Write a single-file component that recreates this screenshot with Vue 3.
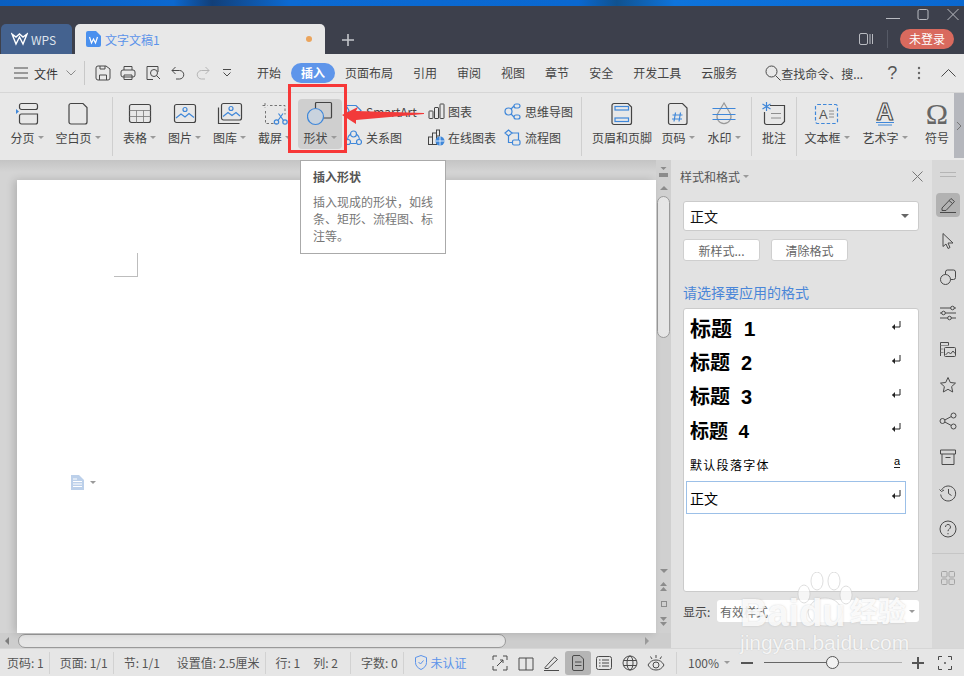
<template>
  <div class="app">
    <div class="desktop"></div>

    <!-- Barra de título -->
    <header class="titlebar">
      <div class="win-row">
        <svg width="16" height="16" viewBox="0 0 16 16" class="win"><path d="M1 11.500h14" /></svg>
        <svg width="16" height="16" viewBox="0 0 16 16" class="win"><rect x="3" y="2.500" width="10" height="10" rx="1.500" /></svg>
        <svg width="16" height="16" viewBox="0 0 16 16" class="win"><path d="M2.500 2l11 11M13.500 2l-11 11" /></svg>
      </div>
      <div class="tab-row">
        <div class="tab-wps">
          <svg width="17" height="14" viewBox="0 0 17 14" class="wps-logo"><path d="M1 2l4 10 3.500-7 3.500 7 4-10-4 3-3.500-3-3.500 3z" /></svg>
          <span>WPS</span>
        </div>
        <div class="tab-doc">
          <svg width="15" height="16" viewBox="0 0 15 16"><path d="M2 0h8l5 5v9a2 2 0 0 1-2 2H2a2 2 0 0 1-2-2V2a2 2 0 0 1 2-2z" fill="#4a90ee" /><path d="M3.500 6l2 6 2-4 2 4 2-6" fill="none" stroke="#fff" stroke-width="1.200" /></svg>
          <span class="doc-name">文字文稿1</span>
          <i class="dot"></i>
        </div>
        <svg width="14" height="14" viewBox="0 0 14 14" class="plus"><path d="M7 1v12M1 7h12" /></svg>
        <div class="title-right">
          <svg width="14" height="14" viewBox="0 0 14 14" class="win"><rect x="0.500" y="1.500" width="8" height="11" rx="1.500" /><path d="M11 2v10M13.500 2v10" /></svg>
          <i class="title-sep"></i>
          <span class="login">未登录</span>
        </div>
      </div>
    </header>

    <!-- Menú -->
    <nav class="menubar">
      <svg width="14" height="12" viewBox="0 0 14 12" class="st-ic ham"><path d="M0 1h14M0 6h14M0 11h14" /></svg>
      <span class="file-menu">文件</span>
      <svg width="10" height="6" viewBox="0 0 10 6" class="chev"><path d="M0.500 0.500l4.500 4.500 4.500-4.500" /></svg>
      <i class="menu-sep"></i>
      <div class="quick">
        <svg width="16" height="16" viewBox="0 0 16 16" class="st-ic"><path d="M1 3a2 2 0 0 1 2-2h8l4 3v9a2 2 0 0 1-2 2H3a2 2 0 0 1-2-2z" /><path d="M4.500 15v-5h7v5M5 1v3h5V1" /></svg>
        <svg width="16" height="16" viewBox="0 0 16 16" class="st-ic"><rect x="1" y="5" width="14" height="7" rx="2" /><path d="M4 5V1.500h8V5M4 10v4.500h8V10z" /></svg>
        <svg width="16" height="16" viewBox="0 0 16 16" class="st-ic"><path d="M13 7V1.500H2v13h6" /><circle cx="9" cy="8" r="3.500" /><path d="M11.500 10.500l3.500 3.500" /></svg>
        <svg width="14" height="14" viewBox="0 0 14 14" class="st-ic q-undo"><path d="M4.500 1L1 4.500 4.500 8M1 4.500h7.500a4 4 0 0 1 0 8.500H5" /></svg>
        <svg width="14" height="14" viewBox="0 0 14 14" class="st-ic faint q-redo"><path d="M9.500 1L13 4.500 9.500 8M13 4.500H5.500a4 4 0 0 0 0 8.500H9" /></svg>
        <svg width="10" height="8" viewBox="0 0 10 8" class="st-ic q-more"><path d="M1 .5h8M1.500 3.500L5 7l3.500-3.500" /></svg>
      </div>
      <div class="tabs">
        <span v-for="t in menuTabs" :key="t" class="menu-tab" :class="{ active: t === '插入' }">{{ t }}</span>
      </div>
      <svg width="16" height="16" viewBox="0 0 16 16" class="st-ic search"><circle cx="6.500" cy="6.500" r="5.500" /><path d="M10.500 10.500l5 5" /></svg>
      <span class="search-text">查找命令、搜...</span>
      <span class="help">?</span>
      <svg width="4" height="14" viewBox="0 0 4 14" class="dots"><circle cx="2" cy="2" r="1.200" /><circle cx="2" cy="7" r="1.200" /><circle cx="2" cy="12" r="1.200" /></svg>
      <svg width="15" height="8" viewBox="0 0 15 8" class="st-ic collapse"><path d="M.5 7.500l7-7 7 7" /></svg>
    </nav>

    <!-- Cinta de herramientas -->
    <section class="ribbon">
      <div class="group g1">
        <div class="tool w50">
          <svg class="ic" viewBox="0 0 26 26"><rect x="5.500" y="2.500" width="18" height="6" rx="2" /><path d="M5.500 15a2 2 0 0 1 2-2h9l3 0 4 0v8a2 2 0 0 1-2 2h-14a2 2 0 0 1-2-2z" /><path d="M2 8l3 2.500L2 13z" class="bf" /></svg>
          <span class="lbl">分页<i class="caret"></i></span>
        </div>
        <div class="tool w52">
          <svg class="ic" viewBox="0 0 26 26"><path d="M6 2.500h12l4 4V21a2 2 0 0 1-2 2H6a2 2 0 0 1-2-2V4.500a2 2 0 0 1 2-2z" /></svg>
          <span class="lbl">空白页<i class="caret"></i></span>
        </div>
      </div>

      <div class="group g2">
        <div class="tool w45">
          <svg class="ic" viewBox="0 0 26 26"><rect x="2.500" y="3.500" width="21" height="18" rx="2" /><path d="M2.500 9.500h21M2.500 15.500h21M9.500 9.500v12M16.500 9.500v12" class="thin" /></svg>
          <span class="lbl">表格<i class="caret"></i></span>
        </div>
        <div class="tool w45">
          <svg class="ic" viewBox="0 0 26 26"><rect x="2.500" y="3.500" width="21" height="18" rx="2" /><circle cx="13" cy="8.500" r="2" class="bs" /><path d="M4 17l5-4 4 3 4-3.500 5 4" class="bs" /></svg>
          <span class="lbl">图片<i class="caret"></i></span>
        </div>
        <div class="tool w45">
          <svg class="ic" viewBox="0 0 26 26"><path d="M1.500 6.500v16h21" /><rect x="4.500" y="2.500" width="20" height="16.500" rx="2" /><circle cx="14" cy="7.500" r="2" class="bs" /><path d="M6 15.500l5-4 4 3 4-3 4 3.500" class="bs" /></svg>
          <span class="lbl">图库<i class="caret"></i></span>
        </div>
        <div class="tool w45">
          <svg class="ic" viewBox="0 0 26 26"><path d="M3 2v5M.5 4.500h5M8 4.500h15v9M3.500 10v12.500h11" stroke-dasharray="2.500 2" class="thin dark" /><circle cx="14.500" cy="21" r="2.200" class="bs" /><circle cx="23" cy="21" r="2.200" class="bs" /><path d="M16 19.500l5-7M21.500 19.500l-5-7" class="bs" /></svg>
          <span class="lbl">截屏<i class="caret"></i></span>
        </div>
        <div class="tool w44 active-tool">
          <svg class="ic" viewBox="0 0 26 26"><rect x="8.500" y="1.500" width="16" height="15.500" rx="1" /><circle cx="8.500" cy="15.500" r="8" fill="#c9d3de" stroke="#3f87d9" /></svg>
          <span class="lbl">形状<i class="caret"></i></span>
        </div>
      </div>

      <div class="mini-cols">
        <div class="mini-col c1">
          <div class="mini">
            <svg width="17" height="17" viewBox="0 0 17 17"><path d="M1 2.500h10l5 5-5 5H1l3-5z" class="bs" /></svg>
            <span>SmartArt</span>
          </div>
          <div class="mini">
            <svg width="17" height="17" viewBox="0 0 17 17"><circle cx="8.500" cy="5" r="3" class="bs" /><circle cx="3" cy="13" r="2.500" class="bs" /><circle cx="14" cy="13" r="2.500" class="bs" /><path d="M5 5.500a6.500 6.500 0 0 0-2.500 5M12 5.500a6.500 6.500 0 0 1 2.500 5M5.500 14.500h6" class="bs" /></svg>
            <span>关系图</span>
          </div>
        </div>
        <div class="mini-col c2">
          <div class="mini">
            <svg width="17" height="17" viewBox="0 0 17 17"><rect x="1" y="8" width="4" height="7.500" rx=".5" class="dk" /><rect x="6.500" y="4.500" width="4" height="11" rx=".5" class="dk" /><rect x="12" y="1" width="4" height="14.500" rx=".5" class="dk" /></svg>
            <span>图表</span>
          </div>
          <div class="mini">
            <svg width="17" height="17" viewBox="0 0 17 17"><rect x=".5" y="8" width="4" height="7.500" class="dk" /><rect x="4.500" y="4" width="4" height="11.500" class="dk" /><rect x="8.500" y="1" width="3" height="6" class="dk" /><circle cx="12" cy="12" r="4.500" fill="#3f87d9" /><path d="M7.500 12h9M12 7.500v9" stroke="#fff" stroke-width=".8" /></svg>
            <span>在线图表</span>
          </div>
        </div>
        <div class="mini-col c3">
          <div class="mini">
            <svg width="17" height="17" viewBox="0 0 17 17"><circle cx="4.500" cy="8.500" r="3.500" class="bs" /><rect x="10" y="1" width="6" height="4" rx="2" class="bs" /><rect x="10" y="12" width="6" height="4" rx="2" class="bs" /><path d="M7 6l3-3M7 11l3 3" class="bs" /></svg>
            <span>思维导图</span>
          </div>
          <div class="mini">
            <svg width="17" height="17" viewBox="0 0 17 17"><path d="M4.500 1l3.500 3-3.500 3L1 4z" class="bs" /><rect x="8.500" y="11" width="7.500" height="5" rx="1.500" class="bs" /><path d="M4.500 7v6.500h4M8 4h6.500v7" class="bs" /></svg>
            <span>流程图</span>
          </div>
        </div>
      </div>

      <div class="group g3">
        <div class="tool w66">
          <svg class="ic" viewBox="0 0 26 26"><path d="M5 2.500h14l3.500 3.500v15.500a2 2 0 0 1-2 2H5a2 2 0 0 1-2-2v-17a2 2 0 0 1 2-2z" /><rect x="6" y="5.500" width="13.500" height="3.500" class="bs" /><rect x="6" y="17" width="13.500" height="3.500" class="bs" /></svg>
          <span class="lbl">页眉和页脚</span>
        </div>
        <div class="tool w46">
          <svg class="ic" viewBox="0 0 26 26"><path d="M5.500 2.500h12l4.500 4.500v14.500a2 2 0 0 1-2 2H5.500a2 2 0 0 1-2-2v-17a2 2 0 0 1 2-2z" /><path d="M10.500 11.500l-1.500 9M15.500 11.500l-1.500 9M7.500 14h10M7 18h10" class="bs" /></svg>
          <span class="lbl">页码<i class="caret"></i></span>
        </div>
        <div class="tool w46">
          <svg class="ic" viewBox="0 0 26 26"><path d="M13 2l-6.500 11a7 7 0 1 0 13 0z" class="gr" /><path d="M1.500 7.500h23M1.500 13.500h23M1.500 18.500h23" class="bs" /></svg>
          <span class="lbl">水印<i class="caret"></i></span>
        </div>
      </div>

      <div class="group g4">
        <div class="tool w44">
          <svg class="ic" viewBox="0 0 26 26"><path d="M9 4.500h14.500v16l-3 3h-15a2 2 0 0 1-2-2V11" /><path d="M10 12.500h10M10 17h10" class="thin" /><path d="M5.500 1v9M1.500 3l8 5M9.500 3l-8 5" class="bs" /></svg>
          <span class="lbl">批注</span>
        </div>
      </div>

      <div class="group g5">
        <div class="tool w58">
          <svg class="ic" viewBox="0 0 26 26"><rect x="1.500" y="3.500" width="22" height="19" rx="2" class="bs" stroke-dasharray="3.500 2" /><text x="5" y="18" class="svg-a">A</text><path d="M15 10h5M15 13h5M15 16h5" class="thin" /></svg>
          <span class="lbl">文本框<i class="caret"></i></span>
        </div>
        <div class="tool w58">
          <svg class="ic" viewBox="0 0 26 26"><text x="13" y="19" class="svg-art">A</text><path d="M4 21.500h18M6 24h14" class="bs" /></svg>
          <span class="lbl">艺术字<i class="caret"></i></span>
        </div>
        <div class="tool w46">
          <span class="omega">Ω</span>
          <span class="lbl">符号</span>
        </div>
      </div>
      <div class="ribbon-more">
        <svg width="6" height="10" viewBox="0 0 6 10" class="st-ic"><path d="M1 1l4 4-4 4" /></svg>
      </div>
    </section>

    <!-- Zona principal -->
    <main class="main">
      <div class="doc-col">
        <div class="doc-top">
          <div class="doc-view">
            <div class="page">
              <div class="crop"></div>
              <div class="doc-tag">
                <svg width="13" height="15" viewBox="0 0 13 15"><path d="M0 0h8l5 5v10H0z" fill="#bcd0ea" /><path d="M2 4h4M2 6.500h9M2 9h9M2 11.500h9" stroke="#fff" /></svg>
                <i class="caret"></i>
              </div>
            </div>
          </div>
          <div class="vscroll">
            <svg width="9" height="10" viewBox="0 0 9 10" class="sb-ic"><path d="M1.500 0h6L4.500 3zM0 6h9v4H0z" /></svg>
            <i class="up tri-first"></i>
            <div class="vthumb"></div>
            <div class="vbottom">
              <i class="down"></i>
              <svg width="9" height="10" viewBox="0 0 9 10" class="sb-ic"><path d="M4.500 0L8 4H1zM4.500 5L8 9H1z" /></svg>
              <i class="square"></i>
              <svg width="9" height="10" viewBox="0 0 9 10" class="sb-ic"><path d="M1 1h7L4.500 5zM1 6h7L4.500 10z" /></svg>
            </div>
          </div>
        </div>
        <div class="hscroll">
          <i class="left"></i>
          <div class="hthumb"></div>
          <i class="right"></i>
        </div>
      </div>

      <!-- Panel de estilos -->
      <aside class="panel">
        <div class="panel-head">
          <span>样式和格式<i class="caret"></i></span>
          <svg width="11" height="11" viewBox="0 0 11 11" class="st-ic panel-close"><path d="M.5.5l10 10M10.500.5l-10 10" /></svg>
        </div>
        <div class="style-select">
          <span>正文</span>
          <i class="select-caret"></i>
        </div>
        <div class="panel-btns">
          <button class="pbtn">新样式...</button>
          <button class="pbtn">清除格式</button>
        </div>
        <p class="apply-label">请选择要应用的格式</p>
        <div class="style-list">
          <div v-for="s in styles" :key="s.name" class="style-item" :class="s.cls">
            <span class="style-name">{{ s.name }}</span>
            <span v-if="s.cls === 'para'" class="a-mark">a</span>
            <svg v-else width="10" height="10" viewBox="0 0 10 10" class="ret"><path d="M9 0v6H1.500" /><path d="M4 3L1 6l3 3z" class="ret-head" /></svg>
          </div>
        </div>
        <div class="show-row">
          <span class="show-label">显示:</span>
          <div class="show-select"><span>有效样式</span><i class="caret"></i></div>
        </div>
      </aside>

      <!-- Barra lateral -->
      <div class="sidebar">
        <div class="side-lines"></div>
        <div class="side-btn on">
          <svg width="18" height="18" viewBox="0 0 18 18" class="st-ic"><path d="M3 12L12 2.500l3.500 3L7 14.500H3zM1 16.500h16M10 4.500l3.500 3" /></svg>
        </div>
        <div class="side-btn">
          <svg width="18" height="18" viewBox="0 0 18 18" class="st-ic"><path d="M4 1.500v13l3-2.500 2 4.500 2-1-2-4.500h5z" /></svg>
        </div>
        <div class="side-btn">
          <svg width="18" height="18" viewBox="0 0 18 18" class="st-ic"><rect x="6.500" y="2" width="10" height="9.500" rx="2" /><circle cx="6.500" cy="11.500" r="5" fill="#d8d8d8" /></svg>
        </div>
        <div class="side-btn">
          <svg width="18" height="18" viewBox="0 0 18 18" class="st-ic"><path d="M1 4h11M15 4h2M1 9h2M6 9h11M1 14h8M12 14h5" /><circle cx="13.500" cy="4" r="1.800" /><circle cx="4.500" cy="9" r="1.800" /><circle cx="10.500" cy="14" r="1.800" /></svg>
        </div>
        <div class="side-btn">
          <svg width="18" height="18" viewBox="0 0 18 18" class="st-ic"><path d="M1.500 16V2.500h8v3" /><path d="M1.500 5.500h8M1.500 9h3M1.500 12.500h3" class="thin" /><rect x="5.500" y="7.500" width="11" height="9" rx="1" /><path d="M6.500 15l3-3 2 2 2.500-3 2 2.500" /></svg>
        </div>
        <div class="side-btn">
          <svg width="18" height="18" viewBox="0 0 18 18" class="st-ic"><path d="M9 1.500l2.300 5 5.200.6-3.900 3.500 1.100 5.400L9 13.300 4.300 16l1.100-5.400L1.500 7.100l5.200-.6z" /></svg>
        </div>
        <div class="side-btn">
          <svg width="18" height="18" viewBox="0 0 18 18" class="st-ic"><circle cx="3.500" cy="9" r="2.500" /><circle cx="14.500" cy="3.500" r="2.500" /><circle cx="14.500" cy="14.500" r="2.500" /><path d="M5.800 8l6.500-3.500M5.800 10l6.500 3.500" /></svg>
        </div>
        <div class="side-btn">
          <svg width="18" height="18" viewBox="0 0 18 18" class="st-ic"><path d="M1.500 2h15v4h-15zM3 6v10.500h12V6M6.500 9.500h5" /></svg>
        </div>
        <div class="side-btn">
          <svg width="18" height="18" viewBox="0 0 18 18" class="st-ic"><path d="M2.500 6a7.500 7.500 0 1 1-.8 4.500M.5 5.500l2 2 2.500-1.500M9.500 5v4.500l3 2" /></svg>
        </div>
        <div class="side-btn">
          <svg width="18" height="18" viewBox="0 0 18 18" class="st-ic"><circle cx="9" cy="9" r="8" /><path d="M6.500 7a2.500 2.500 0 1 1 3.800 2.100c-.9.600-1.300 1-1.300 2.100M9 13v1.300" /></svg>
        </div>
        <div class="side-sep"></div>
        <svg width="14" height="14" viewBox="0 0 14 14" class="st-ic side-grid"><rect x=".5" y=".5" width="5.500" height="5.500" rx="1" /><rect x="8" y=".5" width="5.500" height="5.500" rx="1" /><rect x=".5" y="8" width="5.500" height="5.500" rx="1" /><rect x="8" y="8" width="5.500" height="5.500" rx="1" /></svg>
      </div>
    </main>

    <!-- Barra de estado -->
    <footer class="statusbar">
      <span class="st first">页码: 1</span>
      <span class="st">页面: 1/1</span>
      <span class="st gap17"><span>节: 1/1</span><span>设置值: 2.5厘米</span></span>
      <span class="st gap13 wide-end"><span>行: 1</span><span>列: 2</span></span>
      <span class="st">字数: 0</span>
      <span class="cert">
        <svg width="12" height="15" viewBox="0 0 12 15" class="cert-ic"><path d="M6 .5l5.500 2v5c0 3.500-2.500 5.500-5.500 7-3-1.500-5.500-3.500-5.500-7v-5zM3.500 7l2 2 3-3.500" /></svg>
        未认证
      </span>
      <div class="status-right">
        <div class="view-btn"><svg width="16" height="16" viewBox="0 0 16 16" class="st-ic"><path d="M1 5V1h4M11 1h4v4M1 11v4h4M15 11v4h-4M5 11l6-6M11 5H8M11 5v3" /></svg></div>
        <div class="view-btn"><svg width="16" height="16" viewBox="0 0 16 16" class="st-ic"><path d="M8 3v12M8 3H1v12h7M8 3h7v12H8" /></svg></div>
        <div class="view-btn"><svg width="16" height="16" viewBox="0 0 16 16" class="st-ic"><path d="M1 12.500L10.500 2l3 2.500L4 13.500H1zM0 15.500h15" /></svg></div>
        <div class="view-btn on"><svg width="16" height="16" viewBox="0 0 16 16" class="st-ic"><path d="M2.500 2a1.500 1.500 0 0 1 1.500-1.500h6l3.500 3.500v10a1.500 1.500 0 0 1-1.500 1.500H4a1.500 1.500 0 0 1-1.500-1.500zM5 7h6.500M5 10.500h6.500" /></svg></div>
        <div class="view-btn"><svg width="16" height="16" viewBox="0 0 16 16" class="st-ic"><rect x=".5" y="1.500" width="15" height="13" rx="2" /><path d="M3 5h1.500M6 5h7M3 8h1.500M6 8h7M3 11h1.500M6 11h7" /></svg></div>
        <div class="view-btn"><svg width="16" height="16" viewBox="0 0 16 16" class="st-ic"><circle cx="8" cy="8" r="7" /><ellipse cx="8" cy="8" rx="3" ry="7" /><path d="M1.500 5.500h13M1.500 10.500h13" /></svg></div>
        <div class="view-btn"><svg width="18" height="18" viewBox="0 0 18 18" class="st-ic"><path d="M1 11c2-3.500 4.500-5 8-5s6 1.500 8 5c-2 3.500-4.500 5-8 5s-6-1.500-8-5z" /><circle cx="9" cy="11" r="3" /><path d="M9 1v3M3.500 2.500l1.500 2.500M14.500 2.500L13 5" /></svg></div>
        <i class="status-sep"></i>
        <span class="zoom-val">100%<i class="caret"></i></span>
        <i class="zoom-minus"></i>
        <div class="slider"><i class="slider-done"></i><i class="slider-thumb"></i></div>
        <svg width="12" height="12" viewBox="0 0 12 12" class="zoom-plus"><path d="M6 0v12M0 6h12" /></svg>
        <svg width="14" height="14" viewBox="0 0 14 14" class="st-ic fit"><path d="M.5 4V.5H4M10 .5h3.500V4M.5 10v3.500H4M13.500 10v3.500H10" /><circle cx="7" cy="7" r=".6" /></svg>
      </div>
    </footer>

    <!-- Anotaciones sobre la captura -->
    <div class="red-box"></div>
    <svg class="red-arrow" width="84" height="22" viewBox="0 0 84 22"><polygon points="0,9 16,1 14,5 82,7 82,8 14,14 14,18" fill="#f23a3a" /></svg>

    <div class="tooltip">
      <strong>插入形状</strong>
      <p>插入现成的形状，如线条、矩形、流程图、标注等。</p>
    </div>

    <!-- Marca de agua -->
    <div class="watermark">
      <svg class="paw" width="60" height="56" viewBox="0 0 60 56"><ellipse cx="8" cy="22" rx="6" ry="9" /><ellipse cx="21" cy="9" rx="6" ry="9" /><ellipse cx="38" cy="9" rx="6" ry="9" /><ellipse cx="50" cy="23" rx="6" ry="9" /><ellipse cx="29" cy="40" rx="17" ry="14" /></svg>
      <span class="wm-baidu">Baidu</span>
      <span class="wm-jy">经验</span>
      <span class="wm-url">jingyan.baidu.com</span>
    </div>
  </div>
</template>

<script setup>
const menuTabs = ['开始', '插入', '页面布局', '引用', '审阅', '视图', '章节', '安全', '开发工具', '云服务']

const styles = [
  { name: '标题  1', cls: 'h1' },
  { name: '标题  2', cls: 'h2' },
  { name: '标题  3', cls: 'h3' },
  { name: '标题  4', cls: 'h4' },
  { name: '默认段落字体', cls: 'para' },
  { name: '正文', cls: 'body' }
]
</script>

<style scoped>
.app {
  position: relative;
  width: 964px;
  height: 676px;
  overflow: hidden;
  background: #e6e6e6;
  font-family: "Noto Sans CJK SC", "Liberation Sans", sans-serif;
  font-size: 12px;
  color: #444;
}

svg {
  display: block;
  fill: none;
}

i {
  display: block;
  font-style: normal;
}

.desktop {
  height: 6px;
  background: linear-gradient(90deg, #0a5fc0 0%, #0c68cf 18%, #123f78 22%, #0c6ad2 30%, #0a68d0 60%, #10528f 64%, #0e74dc 70%, #0a68d0 100%);
}

.titlebar {
  height: 48px;
  background: #3d404c;
}

.win-row {
  display: flex;
  justify-content: flex-end;
  align-items: center;
  gap: 14px;
  height: 18px;
  padding-right: 3px;
}

.win {
  stroke: #b9bbc1;
  stroke-width: 1;
}

.tab-row {
  display: flex;
  align-items: flex-end;
  height: 30px;
}

.tab-wps {
  display: flex;
  align-items: center;
  gap: 3px;
  width: 71px;
  height: 30px;
  margin-left: 1px;
  padding-left: 10px;
  box-sizing: border-box;
  border-radius: 5px 5px 0 0;
  background: #44628f;
  color: #dfe4ec;
  font-size: 12px;
}

.wps-logo {
  stroke: #fff;
  stroke-width: 1.400;
}

.tab-doc {
  display: flex;
  align-items: center;
  width: 250px;
  height: 30px;
  margin-left: 3px;
  padding-left: 11px;
  box-sizing: border-box;
  border-radius: 5px 5px 0 0;
  background: #e8e8e8;
}

.doc-name {
  margin-left: 4px;
  color: #5b93ea;
}

.dot {
  width: 6px;
  height: 6px;
  margin-left: auto;
  margin-right: 13px;
  border-radius: 50%;
  background: #eba45c;
}

.plus {
  margin: 0 0 7px 16px;
  stroke: #c4c6cb;
  stroke-width: 1.600;
}

.title-right {
  display: flex;
  align-items: center;
  margin-left: auto;
  height: 30px;
  padding-right: 10px;
}

.title-sep {
  width: 1px;
  height: 18px;
  margin: 0 12px 0 14px;
  background: #565a66;
}

.login {
  width: 54px;
  height: 20px;
  border-radius: 10px;
  background: #d96a5e;
  color: #fff;
  text-align: center;
  line-height: 20px;
  font-size: 12px;
}

.menubar {
  display: flex;
  align-items: center;
  height: 38px;
  border-bottom: 1px solid #d6d6d6;
  background: #e8e8e8;
}

.st-ic {
  stroke: #4a4a4a;
  stroke-width: 1;
  flex: none;
}

.st-ic.faint {
  stroke: #b5b5b5;
}

.ham {
  margin-left: 14px;
}

.file-menu {
  margin-left: 6px;
  color: #333;
}

.chev {
  margin-left: 8px;
  stroke: #8a8a8a;
}

.menu-sep {
  width: 1px;
  height: 24px;
  margin-left: 8px;
  background: #c8c8c8;
}

.quick {
  display: flex;
  align-items: center;
  width: 152px;
  gap: 9px;
  margin-left: 10px;
}

.q-undo { margin-left: 1px; }
.q-redo { margin-left: 2px; }
.q-more { margin-left: 3px; }

.tabs {
  display: flex;
}

.menu-tab {
  height: 20px;
  padding: 0 10px;
  border-radius: 10px;
  line-height: 20px;
}

.menu-tab.active {
  background: #5e95ea;
  color: #fff;
  font-weight: 700;
}

.search {
  margin-left: 18px;
}

.search-text {
  margin-left: 0;
}

.help {
  margin-left: 24px;
  font-size: 18px;
  color: #555;
  font-family: "Liberation Sans", sans-serif;
}

.dots {
  margin-left: 20px;
  fill: #666;
}

.collapse {
  margin-left: 20px;
}

.ribbon {
  position: relative;
  display: flex;
  height: 67px;
  background: #e8e8e8;
  overflow: hidden;
}

.group {
  display: flex;
  flex: none;
  height: 59px;
  margin-top: 4px;
  padding-top: 2px;
  box-sizing: border-box;
}

.g1 {
  width: 113px;
  padding-left: 2px;
  border-right: 1px solid #cfcfcf;
}

.g2 {
  width: 232px;
  padding-left: 4px;
}

.g3 {
  width: 171px;
  padding-left: 7px;
  border-right: 1px solid #cfcfcf;
  border-left: 1px solid #cfcfcf;
}

.g4 {
  width: 45px;
  border-right: 1px solid #cfcfcf;
}

.g5 {
  padding-left: 1px;
}

.tool {
  display: flex;
  flex-direction: column;
  align-items: center;
  flex: none;
  height: 50px;
  border-radius: 4px;
}

.w44 { width: 44px; }
.w45 { width: 45px; }
.w46 { width: 46px; }
.w50 { width: 50px; }
.w52 { width: 52px; }
.w58 { width: 58px; }
.w66 { width: 66px; }

.active-tool {
  margin-left: 1px;
  background: #cfcfcf;
}

.ic {
  width: 26px;
  height: 26px;
  margin-top: 2px;
  stroke: #444;
  stroke-width: 1.200;
}

.thin {
  stroke-width: .8;
  stroke: #777;
}

.thin.dark {
  stroke: #555;
}

.bs {
  stroke: #3f87d9;
  stroke-width: 1.200;
  fill: none;
}

.bf {
  fill: #3f87d9;
  stroke: none;
}

.gr {
  stroke: #999;
}

.dk {
  stroke: #444;
  stroke-width: 1;
}

.svg-a {
  font-family: "Liberation Sans", sans-serif;
  font-size: 13px;
  fill: #555;
  stroke: none;
}

.svg-art {
  font-family: "Liberation Sans", sans-serif;
  font-size: 24px;
  font-weight: 700;
  text-anchor: middle;
  fill: #e8e8e8;
  stroke: #444;
  stroke-width: 1;
}

.omega {
  height: 26px;
  margin-top: 2px;
  font-family: "Liberation Serif", serif;
  font-size: 30px;
  line-height: 26px;
  color: #666;
}

.lbl {
  display: flex;
  align-items: center;
  height: 16px;
  margin-top: 2px;
  white-space: nowrap;
}

.caret {
  display: inline-block;
  width: 0;
  height: 0;
  margin-left: 3px;
  border-left: 3px solid transparent;
  border-right: 3px solid transparent;
  border-top: 3px solid #9a9a9a;
}

.mini-cols {
  display: flex;
  flex: none;
  width: 236px;
}

.mini-col {
  flex: none;
  padding-top: 5px;
}

.c1 { width: 83px; }
.c2 { width: 76px; }
.c3 { width: 77px; }

.mini {
  display: flex;
  align-items: center;
  gap: 4px;
  height: 26px;
  white-space: nowrap;
}

.c2 .mini {
  gap: 3px;
}

.ribbon-more {
  position: absolute;
  top: 0;
  right: 0;
  display: flex;
  align-items: center;
  justify-content: center;
  width: 10px;
  height: 65px;
  background: #b5b7bd;
}

.ribbon-more .st-ic {
  stroke: #777;
}

.main {
  display: flex;
  height: 488px;
}

.doc-col {
  flex: none;
  width: 671px;
}

.doc-top {
  display: flex;
  height: 473px;
}

.doc-view {
  flex: none;
  width: 656px;
  padding: 20px 0 0 17px;
  box-sizing: border-box;
  background: linear-gradient(180deg, #c4c4c4 0, #d4d4d4 12px);
}

.page {
  position: relative;
  width: 639px;
  height: 453px;
  padding: 73px 0 0 97px;
  box-sizing: border-box;
  background: #fff;
  box-shadow: -3px 0 8px rgba(0, 0, 0, .16);
}

.crop {
  width: 24px;
  height: 24px;
  box-sizing: border-box;
  border-right: 1px solid #bdbdbd;
  border-bottom: 1px solid #bdbdbd;
}

.doc-tag {
  position: absolute;
  left: 54px;
  top: 295px;
  display: flex;
  align-items: center;
  gap: 3px;
}

.vscroll {
  display: flex;
  flex-direction: column;
  align-items: center;
  flex: none;
  width: 15px;
  padding-top: 7px;
  box-sizing: border-box;
  background: #d0d0d0;
}

.sb-ic {
  fill: #8c8c8c;
}

.up {
  width: 0;
  height: 0;
  border-left: 4px solid transparent;
  border-right: 4px solid transparent;
  border-bottom: 4px solid #8c8c8c;
}

.tri-first {
  margin-top: 9px;
}

.down {
  width: 0;
  height: 0;
  border-left: 4px solid transparent;
  border-right: 4px solid transparent;
  border-top: 4px solid #8c8c8c;
}

.vthumb {
  width: 13px;
  height: 142px;
  margin-top: 6px;
  box-sizing: border-box;
  border: 1px solid #9a9a9a;
  border-radius: 7px;
  background: #e6e6e6;
}

.vbottom {
  display: flex;
  flex-direction: column;
  align-items: center;
  gap: 9px;
  margin-top: auto;
  padding-bottom: 7px;
}

.square {
  width: 6px;
  height: 6px;
  box-sizing: border-box;
  border: 1px solid #8c8c8c;
}

.hscroll {
  display: flex;
  align-items: center;
  height: 15px;
  background: #cdcdcd;
  padding-left: 5px;
  box-sizing: border-box;
}

.left {
  width: 0;
  height: 0;
  border-top: 4px solid transparent;
  border-bottom: 4px solid transparent;
  border-right: 4px solid #7d7d7d;
}

.right {
  width: 0;
  height: 0;
  margin-left: 139px;
  border-top: 4px solid transparent;
  border-bottom: 4px solid transparent;
  border-left: 4px solid #9a9a9a;
}

.hthumb {
  width: 488px;
  height: 14px;
  margin-left: 9px;
  box-sizing: border-box;
  border: 1px solid #9a9a9a;
  border-radius: 7px;
  background: #e6e6e6;
}

.panel {
  flex: none;
  width: 261px;
  padding: 0 13px 0 12px;
  box-sizing: border-box;
  background: #e2e2e2;
}

.panel-head {
  display: flex;
  align-items: center;
  justify-content: space-between;
  height: 32px;
  margin-left: -3px;
}

.panel-head span {
  display: flex;
  align-items: center;
  color: #555;
}

.panel-close {
  stroke: #777;
  margin-right: -4px;
}

.style-select {
  display: flex;
  align-items: center;
  justify-content: space-between;
  height: 30px;
  margin-top: 9px;
  padding: 0 9px 0 6px;
  box-sizing: border-box;
  border: 1px solid #cbcbcb;
  border-radius: 3px;
  background: #fff;
  font-size: 14px;
  color: #111;
}

.select-caret {
  width: 0;
  height: 0;
  border-left: 4px solid transparent;
  border-right: 4px solid transparent;
  border-top: 4px solid #666;
}

.panel-btns {
  display: flex;
  gap: 11px;
  margin-top: 8px;
}

.pbtn {
  width: 77px;
  height: 22px;
  padding: 0;
  border: 1px solid #cfcfcf;
  border-radius: 3px;
  background: #fff;
  font: inherit;
  color: #666;
}

.apply-label {
  height: 20px;
  margin: 21px 0 1px;
  font-size: 14px;
  line-height: 20px;
  color: #4a86d8;
  white-space: nowrap;
}

.style-list {
  height: 284px;
  margin-top: 6px;
  padding: 2px 2px 0;
  box-sizing: border-box;
  border: 1px solid #cbcbcb;
  border-radius: 3px;
  background: #fff;
}

.style-item {
  display: flex;
  align-items: center;
  justify-content: space-between;
  width: 220px;
  height: 34px;
  padding: 0 5px 0 4px;
  box-sizing: border-box;
  color: #000;
  white-space: pre;
}

.style-name {
  font-family: "Liberation Sans", "Noto Sans CJK SC", sans-serif;
}

.h1 .style-name { margin-top: -2px; font-size: 21px; font-weight: 700; }
.h2 .style-name { margin-top: -2px; font-size: 20px; font-weight: 700; }
.h3 .style-name { margin-top: -2px; font-size: 20px; font-weight: 700; }
.h4 .style-name { margin-top: -2px; font-size: 19px; font-weight: 700; }

.para .style-name {
  font-size: 12px;
  letter-spacing: 1.300px;
}

.body {
  height: 33px;
  border: 1px solid #9cc0e8;
  padding-left: 3px;
  padding-right: 4px;
}

.body .style-name {
  font-size: 14px;
}

.ret {
  margin-bottom: 5px;
  stroke: #222;
  stroke-width: 1;
}

.ret-head {
  fill: #222;
  stroke: none;
}

.a-mark {
  margin: 0 1px 4px 0;
  border-bottom: 1px solid #222;
  font-family: "Liberation Sans", sans-serif;
  font-size: 11px;
  line-height: 11px;
}

.show-row {
  display: flex;
  align-items: center;
  height: 22px;
  margin-top: 8px;
}

.show-label {
  width: 34px;
}

.show-select {
  display: flex;
  align-items: center;
  justify-content: space-between;
  flex: 1;
  height: 22px;
  padding: 0 4px 0 3px;
  box-sizing: border-box;
  border-radius: 3px;
  background: #fff;
  color: #666;
}

.sidebar {
  display: flex;
  flex-direction: column;
  align-items: center;
  flex: 1;
  padding-top: 12px;
  background: #d8d8d8;
  box-sizing: border-box;
}

.side-lines {
  width: 16px;
  height: 5px;
  margin-bottom: 10px;
  border-top: 1px solid #b5b5b5;
  border-bottom: 1px solid #b5b5b5;
  box-sizing: border-box;
}

.side-btn {
  display: flex;
  align-items: center;
  justify-content: center;
  flex: none;
  width: 24px;
  height: 24px;
  margin: 6px 0;
  border-radius: 4px;
}

.side-btn.on {
  background: #b2b2b2;
}

.side-sep {
  width: 32px;
  height: 1px;
  margin-top: 6px;
  background: #c6c6c6;
}

.side-grid {
  margin-top: 17px;
  stroke: #a4a4a4;
}

.statusbar {
  display: flex;
  align-items: center;
  height: 28px;
  border-top: 1px solid #d6d6d6;
  box-sizing: border-box;
  background: #e6e6e6;
  color: #555;
  white-space: nowrap;
}

.st {
  display: flex;
  align-items: center;
  height: 22px;
  padding: 0 5px 0 10px;
  border-right: 1px solid #d2d2d2;
}

.st.first {
  padding-left: 7px;
}

.gap17 { gap: 17px; }
.gap13 { gap: 13px; }

.wide-end {
  padding-right: 12px;
}

.cert {
  display: flex;
  align-items: center;
  gap: 4px;
  margin-left: 11px;
  color: #5b93ea;
}

.cert-ic {
  stroke: #5b93ea;
  stroke-width: 1;
}

.status-right {
  display: flex;
  align-items: center;
  flex: none;
  width: 477px;
  margin-left: auto;
}

.view-btn {
  display: flex;
  align-items: center;
  justify-content: center;
  flex: none;
  width: 26px;
  height: 24px;
}

.view-btn.on {
  border-radius: 3px;
  background: #b5b5b5;
}

.status-sep {
  width: 1px;
  height: 22px;
  margin: 0 11px 0 7px;
  background: #d2d2d2;
}

.zoom-val {
  display: flex;
  align-items: center;
  width: 53px;
}

.zoom-val .caret {
  margin-left: 5px;
}

.zoom-minus {
  width: 12px;
  height: 2px;
  background: #555;
}

.slider {
  position: relative;
  width: 138px;
  height: 1px;
  margin-left: 11px;
  background: #b0b0b0;
}

.slider-done {
  width: 69px;
  height: 1px;
  background: #666;
}

.slider-thumb {
  position: absolute;
  left: 62px;
  top: -6px;
  width: 13px;
  height: 13px;
  box-sizing: border-box;
  border: 1px solid #555;
  border-radius: 50%;
  background: #f2f2f2;
}

.zoom-plus {
  margin-left: 10px;
  stroke: #555;
  stroke-width: 2;
}

.fit {
  margin-left: 14px;
}

.red-box {
  position: absolute;
  left: 288px;
  top: 84px;
  width: 59px;
  height: 69px;
  box-sizing: border-box;
  border: 3px solid #f73737;
}

.red-arrow {
  position: absolute;
  left: 342px;
  top: 106px;
}

.tooltip {
  position: absolute;
  left: 300px;
  top: 160px;
  width: 146px;
  height: 94px;
  padding: 7px 12px;
  box-sizing: border-box;
  border: 1px solid #aaa;
  background: #fff;
  color: #777;
}

.tooltip strong {
  display: block;
  font-size: 12px;
  line-height: 17px;
  color: #555;
}

.tooltip p {
  margin: 8px 0 0;
  line-height: 17px;
}

.watermark {
  position: absolute;
  left: 0;
  top: 0;
  pointer-events: none;
}

.paw {
  position: absolute;
  left: 796px;
  top: 572px;
  fill: rgba(255, 255, 255, .7);
  stroke: rgba(190, 190, 190, .5);
  stroke-width: 1;
}

.wm-baidu {
  position: absolute;
  left: 740px;
  top: 592px;
  font-family: "Liberation Sans", sans-serif;
  font-size: 38px;
  line-height: 42px;
  font-weight: 700;
  color: rgba(255, 255, 255, .85);
  text-shadow: 0 0 2px rgba(130, 130, 130, .35);
}

.wm-jy {
  position: absolute;
  left: 850px;
  top: 591px;
  font-size: 28px;
  line-height: 38px;
  font-weight: 700;
  white-space: nowrap;
  color: rgba(255, 255, 255, .9);
  text-shadow: 0 0 2px rgba(130, 130, 130, .35);
}

.wm-url {
  position: absolute;
  left: 740px;
  top: 631px;
  font-family: "Liberation Sans", sans-serif;
  font-size: 21px;
  line-height: 24px;
  white-space: nowrap;
  color: rgba(255, 255, 255, .85);
  text-shadow: 0 0 1px rgba(130, 130, 130, .4);
}
</style>

<style>
html,
body {
  margin: 0;
  overflow: hidden;
  background: #e6e6e6;
}
</style>
